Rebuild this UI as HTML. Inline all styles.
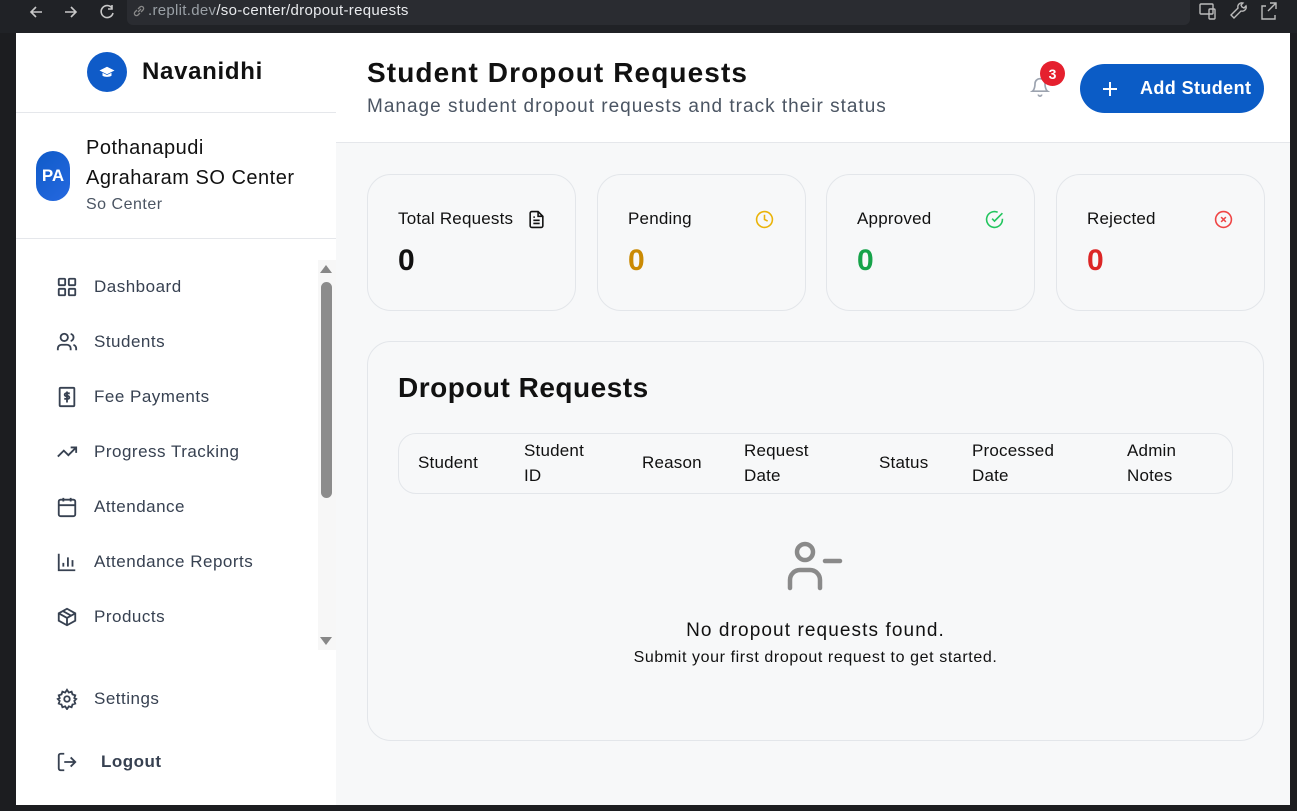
<!DOCTYPE html>
<html><head><meta charset="utf-8"><style>
*{box-sizing:border-box;margin:0;padding:0}
body{width:1297px;height:811px;overflow:hidden;background:#1c1d20;font-family:"Liberation Sans",sans-serif;position:relative;letter-spacing:0.5px}
.abs{position:absolute}
.top{left:0;top:0;width:1297px;height:33px;background:#202226}
.url{left:127px;top:0;width:1063px;height:25px;background:#2a2c31;border-radius:0 0 6px 6px}
.side{left:16px;top:33px;width:320px;height:772px;background:#fff}
.main{left:336px;top:33px;width:954px;height:772px;background:#f7f8f9}
.hdr{left:336px;top:33px;width:954px;height:110px;background:#fff;border-bottom:1px solid #e5e7eb}
.nav{left:56px;width:250px;height:24px;display:flex;align-items:center;font-size:17px;color:#374151}
.nav svg{width:22px;height:22px;margin-right:16px;flex:none}
.card{top:174px;width:209px;height:137px;border:1px solid #e3e6ea;border-radius:24px;background:#f7f8f9}
.card .l{position:absolute;left:30px;top:34px;font-size:17px;color:#111;letter-spacing:0.2px}
.card .n{position:absolute;left:30px;top:69px;font-size:30px;font-weight:bold}
.card svg{position:absolute;top:35px;width:19px;height:19px}
.th{position:absolute;font-size:17px;color:#111;line-height:25px;letter-spacing:0.2px}
</style></head><body>
<div class="abs top"></div>
<div class="abs url"></div>
<svg class="abs" style="left:28px;top:3px" width="110" height="18" viewBox="0 0 110 18" fill="none" stroke="#c8c8c8" stroke-width="1.6"><path d="M14 9H3M8 4L3 9l5 5"/><path d="M37 9h11M43 4l5 5-5 5"/><path d="M84 5a6 6 0 1 0 1 5M84 2v4h-4"/></svg>
<svg class="abs" style="left:132px;top:4px" width="14" height="14" viewBox="0 0 14 14" fill="none" stroke="#888" stroke-width="1.3"><path d="M6 8l3-3M5 6L3 8a2 2 0 0 0 3 3l2-2M9 8l2-2a2 2 0 0 0-3-3L6 5"/></svg>
<div class="abs" style="left:148px;top:2px;font-size:15px;color:#9aa0a6;letter-spacing:0.3px">.replit.dev<span style="color:#e8eaed">/so-center/dropout-requests</span></div>
<svg class="abs" style="left:1198px;top:1px" width="90" height="20" viewBox="0 0 90 20" fill="none" stroke="#bbb" stroke-width="1.4"><rect x="2" y="3" width="13" height="10" rx="1"/><rect x="11" y="8" width="6" height="10" rx="1"/><path d="M36 17l7-7a4 4 0 0 0 5-5l-2 2-2-1-1-2 2-2a4 4 0 0 0-5 5l-7 7z"/><path d="M68 5h-4v13h13v-4M72 2h6v6M78 2l-8 8"/></svg>
<div class="abs side"></div>
<div class="abs main"></div>
<div class="abs hdr"></div>
<div class="abs" style="left:87px;top:52px;width:40px;height:40px;border-radius:50%;background:#0f5bc8"></div>
<svg class="abs" style="left:98px;top:63px" width="18" height="18" viewBox="0 0 24 24" fill="#fff"><path d="M12 5L2 10l10 5 10-5z"/><path d="M6 13v4c3 2 9 2 12 0v-4l-6 3z"/></svg>
<div class="abs" style="left:142px;top:58px;font-size:24px;font-weight:bold;color:#111;letter-spacing:0.7px">Navanidhi</div>
<div class="abs" style="left:16px;top:112px;width:320px;height:1px;background:#e5e7eb"></div>
<div class="abs" style="left:36px;top:151px;width:34px;height:50px;border-radius:17px;background:linear-gradient(135deg,#0f5bc8,#2568e0);color:#fff;font-weight:bold;font-size:17px;display:flex;align-items:center;justify-content:center;letter-spacing:0">PA</div>
<div class="abs" style="left:86px;top:133px;font-size:20px;line-height:30px;color:#111;letter-spacing:0.5px">Pothanapudi<br>Agraharam SO Center</div>
<div class="abs" style="left:86px;top:196px;font-size:16px;color:#4b5563">So Center</div>
<div class="abs" style="left:16px;top:238px;width:320px;height:1px;background:#e5e7eb"></div>
<div class="abs" style="left:318px;top:260px;width:18px;height:390px;background:#f7f7f7"></div>
<div class="abs" style="left:320px;top:265px;width:0;height:0;border-left:6px solid transparent;border-right:6px solid transparent;border-bottom:8px solid #888"></div>
<div class="abs" style="left:321px;top:282px;width:11px;height:216px;border-radius:6px;background:#8c8c8c"></div>
<div class="abs" style="left:320px;top:637px;width:0;height:0;border-left:6px solid transparent;border-right:6px solid transparent;border-top:8px solid #888"></div>
<div class="abs nav" style="top:275px"><svg viewBox="0 0 24 24" fill="none" stroke="#374151" stroke-width="2"><rect x="3" y="3" width="7" height="7" rx="1"/><rect x="14" y="3" width="7" height="7" rx="1"/><rect x="14" y="14" width="7" height="7" rx="1"/><rect x="3" y="14" width="7" height="7" rx="1"/></svg>Dashboard</div>
<div class="abs nav" style="top:330px"><svg viewBox="0 0 24 24" fill="none" stroke="#374151" stroke-width="2"><path d="M16 21v-2a4 4 0 0 0-4-4H6a4 4 0 0 0-4 4v2"/><circle cx="9" cy="7" r="4"/><path d="M22 21v-2a4 4 0 0 0-3-3.9M16 3.1a4 4 0 0 1 0 7.8"/></svg>Students</div>
<div class="abs nav" style="top:385px"><svg viewBox="0 0 24 24" fill="none" stroke="#374151" stroke-width="2"><rect x="4" y="2" width="16" height="20" rx="1"/><path d="M15 8h-4a1.5 1.5 0 0 0 0 3h2a1.5 1.5 0 0 1 0 3H9M12 6v12"/></svg>Fee Payments</div>
<div class="abs nav" style="top:440px"><svg viewBox="0 0 24 24" fill="none" stroke="#374151" stroke-width="2"><path d="M22 7l-8.5 8.5-5-5L2 17M16 7h6v6"/></svg>Progress Tracking</div>
<div class="abs nav" style="top:495px"><svg viewBox="0 0 24 24" fill="none" stroke="#374151" stroke-width="2"><rect x="3" y="4" width="18" height="18" rx="2"/><path d="M16 2v4M8 2v4M3 10h18"/></svg>Attendance</div>
<div class="abs nav" style="top:550px"><svg viewBox="0 0 24 24" fill="none" stroke="#374151" stroke-width="2"><path d="M3 3v18h18M8 17v-4M13 17V7M18 17v-7"/></svg>Attendance Reports</div>
<div class="abs nav" style="top:605px"><svg viewBox="0 0 24 24" fill="none" stroke="#374151" stroke-width="2"><path d="M21 8l-9-5-9 5v8l9 5 9-5z"/><path d="M3 8l9 5 9-5M12 13v8M7.5 5.5l9 5"/></svg>Products</div>
<div class="abs nav" style="top:687px"><svg viewBox="0 0 24 24" fill="none" stroke="#374151" stroke-width="2"><circle cx="12" cy="12" r="3"/><path d="M12 2l2 3 3-1 1 3 3 1-1 3 2 1-2 2 1 3-3 1-1 3-3-1-2 3-2-3-3 1-1-3-3-1 1-3-2-2 2-1-1-3 3-1 1-3 3 1z"/></svg>Settings</div>
<div class="abs nav" style="top:750px;font-weight:bold;font-size:17px"><svg viewBox="0 0 24 24" fill="none" stroke="#374151" stroke-width="2" style="margin-right:23px"><path d="M9 21H5a2 2 0 0 1-2-2V5a2 2 0 0 1 2-2h4M16 17l5-5-5-5M21 12H9"/></svg>Logout</div>
<div class="abs" style="left:367px;top:57px;font-size:28px;font-weight:bold;color:#111;letter-spacing:1.1px">Student Dropout Requests</div>
<div class="abs" style="left:367px;top:96px;font-size:19px;color:#4b5563;letter-spacing:1px">Manage student dropout requests and track their status</div>
<svg class="abs" style="left:1030px;top:77px" width="20" height="20" viewBox="0 0 24 24" fill="none" stroke="#9ca3af" stroke-width="2"><path d="M6 8a6 6 0 0 1 12 0c0 7 3 9 3 9H3s3-2 3-9M10 21a2 2 0 0 0 4 0"/></svg>
<div class="abs" style="left:1040px;top:61px;width:25px;height:25px;border-radius:50%;background:#e5202e;color:#fff;font-size:14px;font-weight:bold;display:flex;align-items:center;justify-content:center;letter-spacing:0">3</div>
<div class="abs" style="left:1080px;top:64px;width:184px;height:49px;border-radius:25px;background:#0b5cc6;color:#fff;font-size:18px;font-weight:bold;line-height:49px;padding-left:60px;letter-spacing:0.4px">Add Student</div>
<svg class="abs" style="left:1101px;top:80px" width="18" height="18" viewBox="0 0 18 18" stroke="#fff" stroke-width="2"><path d="M9 2v14M2 9h14"/></svg>
<div class="abs card" style="left:367px"><div class="l">Total Requests</div><div class="n" style="color:#111">0</div><svg style="left:159px" viewBox="0 0 24 24" fill="none" stroke="#111" stroke-width="2"><path d="M14 2H6a2 2 0 0 0-2 2v16a2 2 0 0 0 2 2h12a2 2 0 0 0 2-2V8z"/><path d="M14 2v6h6M16 13H8M16 17H8M10 9H8"/></svg></div>
<div class="abs card" style="left:597px"><div class="l">Pending</div><div class="n" style="color:#ca8a04">0</div><svg style="left:157px" viewBox="0 0 24 24" fill="none" stroke="#eab308" stroke-width="2"><circle cx="12" cy="12" r="10"/><path d="M12 6v6l4 2"/></svg></div>
<div class="abs card" style="left:826px"><div class="l">Approved</div><div class="n" style="color:#16a34a">0</div><svg style="left:158px" viewBox="0 0 24 24" fill="none" stroke="#22c55e" stroke-width="2"><path d="M22 11v1a10 10 0 1 1-6-9.2"/><path d="M22 4L12 14l-3-3"/></svg></div>
<div class="abs card" style="left:1056px"><div class="l">Rejected</div><div class="n" style="color:#dc2626">0</div><svg style="left:157px" viewBox="0 0 24 24" fill="none" stroke="#ef4444" stroke-width="2"><circle cx="12" cy="12" r="10"/><path d="M15 9l-6 6M9 9l6 6"/></svg></div>
<div class="abs" style="left:367px;top:341px;width:897px;height:400px;border:1px solid #e3e6ea;border-radius:24px"></div>
<div class="abs" style="left:398px;top:372px;font-size:28px;font-weight:bold;color:#111;letter-spacing:0.5px">Dropout Requests</div>
<div class="abs" style="left:398px;top:433px;width:835px;height:61px;border:1px solid #e3e6ea;border-radius:18px"></div>
<div class="th" style="left:418px;top:450px">Student</div>
<div class="th" style="left:524px;top:438px">Student<br>ID</div>
<div class="th" style="left:642px;top:450px">Reason</div>
<div class="th" style="left:744px;top:438px">Request<br>Date</div>
<div class="th" style="left:879px;top:450px">Status</div>
<div class="th" style="left:972px;top:438px">Processed<br>Date</div>
<div class="th" style="left:1127px;top:438px">Admin<br>Notes</div>
<svg class="abs" style="left:787px;top:538px" width="58" height="54" viewBox="0 0 58 54" fill="none" stroke="#8a8a8a" stroke-width="4.5" stroke-linecap="round"><circle cx="18" cy="14" r="8"/><path d="M3 50v-8a10 10 0 0 1 10-10h10a10 10 0 0 1 10 10v8M38 23h15"/></svg>
<div class="abs" style="left:367px;top:620px;width:897px;text-align:center;font-size:19px;color:#111;letter-spacing:1.1px">No dropout requests found.</div>
<div class="abs" style="left:367px;top:649px;width:897px;text-align:center;font-size:16px;color:#111;letter-spacing:0.6px">Submit your first dropout request to get started.</div>
</body></html>
